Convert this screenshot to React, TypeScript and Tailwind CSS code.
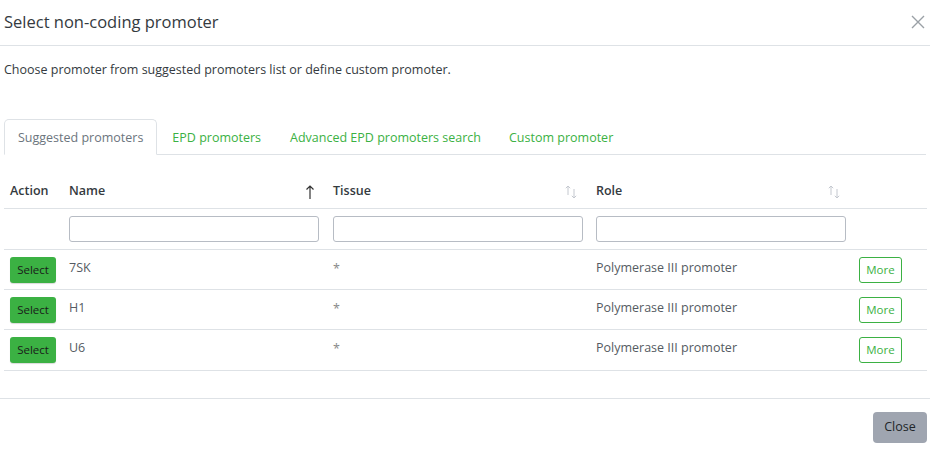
import React from "react";

const rows = [
  { name: "7SK", tissue: "*", role: "Polymerase III promoter" },
  { name: "H1", tissue: "*", role: "Polymerase III promoter" },
  { name: "U6", tissue: "*", role: "Polymerase III promoter" },
];

function UpArrow() {
  return (
    <svg width="10" height="16" viewBox="0 0 10 16" className="text-[#333]">
      <path d="M5 15V2M1.5 5.5L5 2l3.5 3.5" fill="none" stroke="currentColor" strokeWidth="1.2" />
    </svg>
  );
}

function UpDown() {
  return (
    <svg width="14" height="16" viewBox="0 0 14 16" className="text-[#c4c8cf]">
      <path d="M4 11V2M1.8 4.2L4 2l2.2 2.2M10 5v9M7.8 11.8L10 14l2.2-2.2" fill="none" stroke="currentColor" strokeWidth="1" />
    </svg>
  );
}

export default function App() {
  return (
    <div className="w-[930px] h-[452px] bg-white font-['Open_Sans',sans-serif] text-[#212529] overflow-hidden">
      <div className="h-[46px] border-b border-[#dee2e6] flex items-center justify-between pl-[4px] pr-[4px]">
        <div className="text-[16.5px] text-[#343a40]">Select non-coding promoter</div>
        <svg width="16" height="16" viewBox="0 0 16 16" className="text-[#9aa0a6] mb-[2px]">
          <path d="M2 2l12 12M14 2L2 14" stroke="currentColor" strokeWidth="1.4" fill="none" />
        </svg>
      </div>
      <div className="px-[4px]">
        <div className="pt-[15px] text-[12.5px] text-[#343a40] h-[73px]">
          Choose promoter from suggested promoters list or define custom promoter.
        </div>
        <div className="flex border-b border-[#dee2e6] h-[36px] text-[12.5px]">
          <div className="px-[13px] pt-[3px] border border-[#dee2e6] border-b-white rounded-t-[5px] -mb-px bg-white flex items-center text-[#6c757d]">
            Suggested promoters
          </div>
          <div className="px-[15px] pt-[3px] flex items-center text-[#3bb143]">EPD promoters</div>
          <div className="px-[14px] pt-[3px] flex items-center text-[#3bb143]">Advanced EPD promoters search</div>
          <div className="px-[14px] pt-[3px] flex items-center text-[#3bb143]">Custom promoter</div>
        </div>
        <table className="w-[923px] table-fixed border-collapse text-[12.5px]">
          <colgroup>
            <col className="w-[59px]" />
            <col className="w-[264px]" />
            <col className="w-[263px]" />
            <col className="w-[263px]" />
            <col className="w-[74px]" />
          </colgroup>
          <thead>
            <tr className="h-[53px] border-b border-[#dee2e6] text-[#343a40]">
              <th className="text-left font-semibold px-[6px] pt-[21px] align-middle">Action</th>
              <th className="text-left font-semibold px-[6px] pt-[21px] align-middle">
                <div className="flex items-center justify-between pr-[6px]">
                  <span>Name</span>
                  <UpArrow />
                </div>
              </th>
              <th className="text-left font-semibold px-[6px] pt-[21px] align-middle">
                <div className="flex items-center justify-between pr-[6px]">
                  <span>Tissue</span>
                  <UpDown />
                </div>
              </th>
              <th className="text-left font-semibold px-[6px] pt-[21px] align-middle">
                <div className="flex items-center justify-between pr-[6px]">
                  <span>Role</span>
                  <UpDown />
                </div>
              </th>
              <th></th>
            </tr>
            <tr className="h-[41px] border-b border-[#dee2e6]">
              <th></th>
              <th className="px-[6px] text-left">
                <input className="w-[250px] h-[26px] border border-[#b7bcc4] rounded-[3px] outline-none" />
              </th>
              <th className="px-[6px] text-left">
                <input className="w-[250px] h-[26px] border border-[#b7bcc4] rounded-[3px] outline-none" />
              </th>
              <th className="px-[6px] text-left">
                <input className="w-[250px] h-[26px] border border-[#b7bcc4] rounded-[3px] outline-none" />
              </th>
              <th></th>
            </tr>
          </thead>
          <tbody>
            {rows.map((r, i) => (
              <tr key={r.name} className={(i === 2 ? "h-[41px]" : "h-[40px]") + " border-b border-[#dee2e6] text-[#555b62]"}>
                <td className="px-[6px] align-top pt-[7px]">
                  <button className="w-[46px] h-[26px] bg-[#3bb143] rounded-[3px] text-[11.5px] text-[#1a1a1a] shadow-[0_1px_1px_rgba(0,0,0,0.15)]">
                    Select
                  </button>
                </td>
                <td className="px-[6px] align-top pt-[9px]">{r.name}</td>
                <td className="px-[6px] align-top pt-[10px] text-[#888]">{r.tissue}</td>
                <td className="px-[6px] align-top pt-[9px]">{r.role}</td>
                <td className="px-[6px] align-top pt-[7px]">
                  <button className="w-[43px] h-[26px] border border-[#3bb143] rounded-[3px] text-[11.5px] text-[#3bb143] bg-white">
                    More
                  </button>
                </td>
              </tr>
            ))}
          </tbody>
        </table>
      </div>
      <div className="mt-[27px] border-t border-[#dee2e6] flex justify-end pr-[3px] pt-[13px]">
        <button className="w-[54px] h-[31px] bg-[#9fa5b0] rounded-[4px] text-[12.5px] text-[#212529]">Close</button>
      </div>
    </div>
  );
}
